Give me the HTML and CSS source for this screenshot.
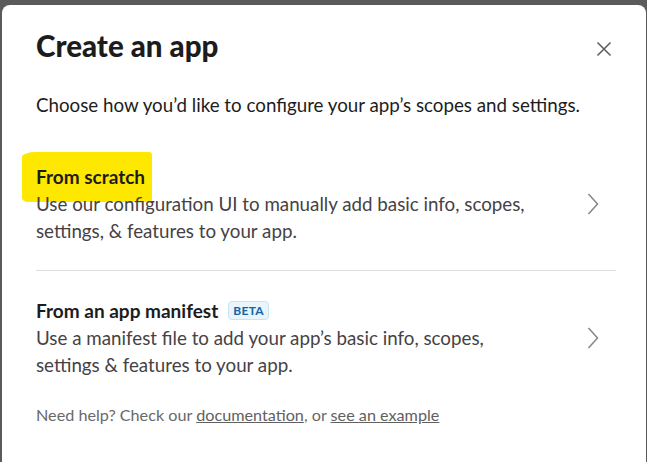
FILE: index.html
```html
<!DOCTYPE html>
<html lang="en">
<head>
<meta charset="utf-8">
<title>Create an app</title>
<link rel="stylesheet" href="styles.css">
</head>
<body>
<div class="modal">
  <div class="modal-header">
    <h1 class="modal-title">Create an app</h1>
    <button class="close-btn" aria-label="Close">
      <svg width="16" height="16" viewBox="0 0 16 16"><path d="M1.5 1.5 L14.5 14.5 M14.5 1.5 L1.5 14.5" stroke="#616061" stroke-width="1.6" fill="none"/></svg>
    </button>
  </div>
  <p class="intro">Choose how you’d like to configure your app’s scopes and settings.</p>
  <div class="options">
    <div class="option option-first">
      <span class="highlight"></span>
      <div class="option-text">
        <div class="option-title">From scratch</div>
        <div class="option-desc">Use our configuration UI to manually add basic info, scopes, settings, &amp; features to your app.</div>
      </div>
      <svg class="chevron" width="12" height="22" viewBox="0 0 12 22"><path d="M1.5 1 L10.5 11 L1.5 21" stroke="#868686" stroke-width="1.5" fill="none"/></svg>
    </div>
    <div class="option option-last">
      <div class="option-text">
        <div class="option-title">From an app manifest <span class="badge">BETA</span></div>
        <div class="option-desc">Use a manifest file to add your app’s basic info, scopes, settings &amp; features to your app.</div>
      </div>
      <svg class="chevron" width="12" height="22" viewBox="0 0 12 22"><path d="M1.5 1 L10.5 11 L1.5 21" stroke="#868686" stroke-width="1.5" fill="none"/></svg>
    </div>
  </div>
  <p class="help">Need help? Check our <a href="#">documentation</a>, or <a href="#">see an example</a></p>
</div>
</body>
</html>
```

FILE: styles.css
```css
html, body {
  margin: 0;
  padding: 0;
  height: 462px;
  overflow: hidden;
}
body {
  background: #5b5b5b;
  font-family: Lato, "Noto Sans", sans-serif;
  color: #1d1c1d;
}
.modal {
  margin: 5px 1px 0 2px;
  height: 470px;
  background: #fff;
  border-radius: 8px 8px 0 0;
  padding: 20px 30px 0 34px;
  box-sizing: border-box;
}
.modal-header {
  display: flex;
  align-items: center;
  justify-content: space-between;
}
.modal-title {
  margin: 0;
  font-size: 29.5px;
  font-weight: 900;
  line-height: 34px;
}
.close-btn {
  border: 0;
  background: none;
  padding: 0;
  width: 36px;
  height: 36px;
  display: flex;
  align-items: center;
  justify-content: center;
  margin-top: 6px;
  margin-right: -6px;
}
.intro {
  margin: 24px 0 0;
  font-size: 18.75px;
  line-height: 27px;
  color: #1d1c1d;
}
.options {
  margin-top: 21px;
}
.option {
  position: relative;
  display: flex;
  align-items: center;
  border-bottom: 1px solid #dddddd;
}
.option-first {
  padding: 24px 0 26px;
}
.option-last {
  border-bottom: 0;
  padding: 26px 0 26px;
}
.option-text {
  position: relative;
  flex: 1;
  max-width: 500px;
}
.option-title {
  font-size: 19px;
  font-weight: 700;
  line-height: 27px;
  display: flex;
  align-items: center;
}
.option-desc {
  font-size: 18.75px;
  line-height: 27px;
  color: #454245;
}
.chevron {
  margin-left: auto;
  margin-right: 17px;
}
.highlight {
  position: absolute;
  left: -14px;
  top: 13px;
  width: 130px;
  height: 50px;
  background: #ffe800;
  border-radius: 14px 3px 2px 6px / 5px 3px 3px 4px;
}
.badge {
  display: inline-block;
  margin-left: 10px;
  padding: 0 4px;
  height: 17px;
  line-height: 17px;
  font-size: 12px;
  font-weight: 700;
  color: #1264a3;
  background: #e8f5fa;
  border: 1px solid #c8e4f4;
  border-radius: 4px;
  letter-spacing: 0.3px;
}
.help {
  margin: 0;
  font-size: 16.2px;
  line-height: 22px;
  color: #696969;
}
.help a {
  color: #616061;
  text-decoration: underline;
}
```
